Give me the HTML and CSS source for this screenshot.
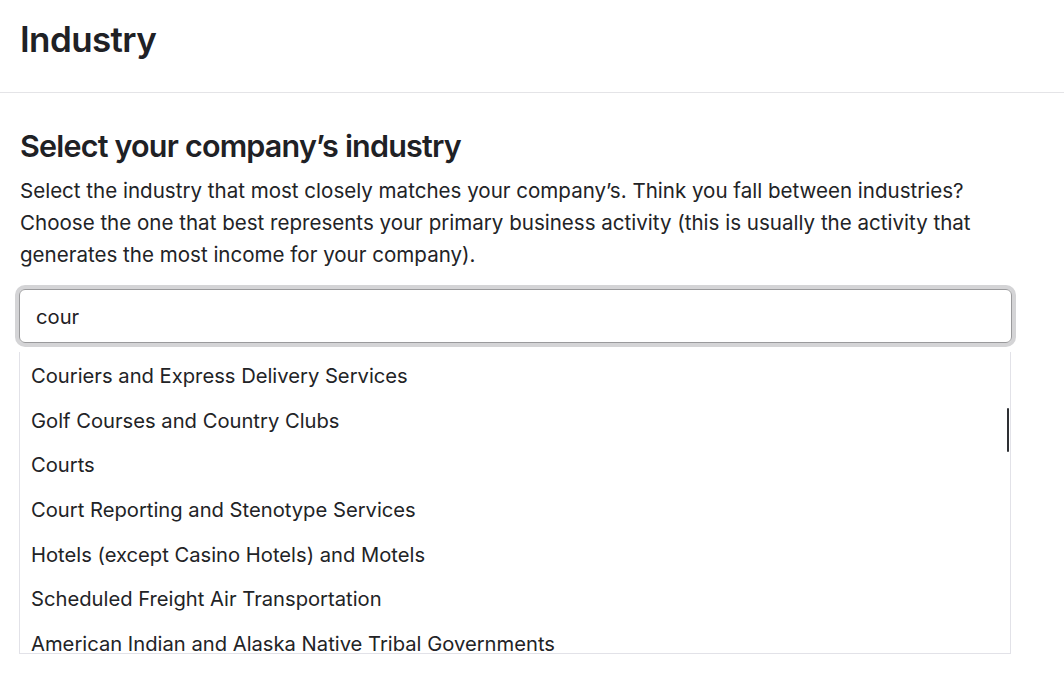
FILE: index.html
```html
<!DOCTYPE html>
<html lang="en">
<head>
<meta charset="utf-8">
<title>Industry</title>
<link rel="stylesheet" href="styles.css">
</head>
<body>
<header class="page-header">
  <h1 class="page-title">Industry</h1>
</header>
<main class="content">
  <h2 class="section-title">Select your company’s industry</h2>
  <p class="description">Select the industry that most closely matches your company’s. Think you fall between industries? Choose the one that best represents your primary business activity (this is usually the activity that generates the most income for your company).</p>
  <div class="combo">
    <div class="input">cour</div>
    <div class="listbox">
      <ul class="options">
        <li class="option">Couriers and Express Delivery Services</li>
        <li class="option">Golf Courses and Country Clubs</li>
        <li class="option">Courts</li>
        <li class="option">Court Reporting and Stenotype Services</li>
        <li class="option">Hotels (except Casino Hotels) and Motels</li>
        <li class="option">Scheduled Freight Air Transportation</li>
        <li class="option">American Indian and Alaska Native Tribal Governments</li>
      </ul>
      <div class="scroll-thumb"></div>
    </div>
  </div>
</main>
</body>
</html>
```
FILE: styles.css
```css
* { box-sizing: border-box; }
html, body { margin: 0; padding: 0; background: #fff; }
body {
  font-family: Inter, "Noto Sans", "Liberation Sans", sans-serif;
  color: #222326;
  width: 1064px;
  height: 688px;
  overflow: hidden;
}
.page-header {
  height: 93px;
  border-bottom: 1px solid #e4e4e7;
  padding: 17px 20px 0;
}
.page-title {
  margin: 0;
  font-size: 35px;
  font-weight: 600;
  letter-spacing: -0.6px;
  line-height: 44px;
  color: #1f2125;
}
.content {
  padding: 0 20px;
}
.section-title {
  margin: 33px 0 0;
  font-size: 30.5px;
  font-weight: 600;
  letter-spacing: -0.8px;
  line-height: 40px;
  color: #1f2125;
}
.description {
  margin: 9px 0 0;
  font-size: 20.55px;
  line-height: 32px;
  width: 1000px;
  color: #222326;
}
.combo {
  margin-top: 18px;
  width: 993px;
  margin-left: -1px;
}
.input {
  height: 54px;
  border: 1px solid #9a9a9c;
  border-radius: 6px;
  box-shadow: 0 0 0 4px #d4d4d6;
  padding: 1px 16px 0;
  display: flex;
  align-items: center;
  font-size: 20.2px;
  color: #1f2125;
}
.listbox {
  position: relative;
  margin-top: 9px;
  width: 992px;
  height: 302px;
  border: 1px solid #e2e2e8;
  border-top: none;
  overflow: hidden;
}
.options {
  list-style: none;
  margin: 0;
  padding: 1px 0 0;
}
.option {
  height: 44.7px;
  padding: 0 11px;
  display: flex;
  align-items: center;
  font-size: 20.2px;
  color: #222326;
  white-space: nowrap;
}
.scroll-thumb {
  position: absolute;
  right: 1px;
  top: 56px;
  width: 2px;
  height: 44px;
  background: #2e3034;
  border-radius: 1px;
}
```
